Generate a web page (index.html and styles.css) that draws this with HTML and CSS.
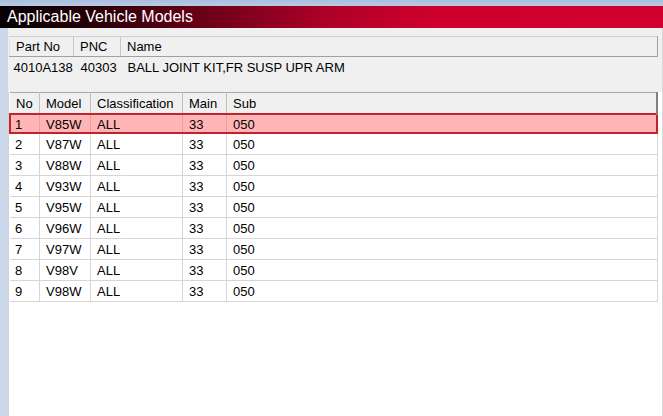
FILE: index.html
```html
<!DOCTYPE html>
<html lang="en">
<head>
    <meta charset="UTF-8">
    <title>Applicable Vehicle Models</title>
    <link rel="stylesheet" href="styles.css">
</head>
<body>
    <div class="window">
        <div class="title">Applicable Vehicle Models</div>

        <div class="frame">
            <div class="side"></div>
            <div class="content">
                <div class="part-area">
                    <table class="part-table">
                        <tr>
                            <th class="c-part">Part No</th>
                            <th class="c-pnc">PNC</th>
                            <th>Name</th>
                        </tr>
                        <tr>
                            <td>4010A138</td>
                            <td>40303</td>
                            <td>BALL JOINT KIT,FR SUSP UPR ARM</td>
                        </tr>
                    </table>
                </div>

                <div class="models-area">
                    <table class="models">
                        <tr>
                            <th class="c-no">No</th>
                            <th class="c-model">Model</th>
                            <th class="c-class">Classification</th>
                            <th class="c-main">Main</th>
                            <th class="c-sub">Sub</th>
                        </tr>
                        <tbody id="modelRows">
                            <!-- rows filled below -->
                        </tbody>
                    </table>
                </div>
            </div>
        </div>
    </div>

    <script>
        // Vehicle model list
        const models = ["V85W", "V87W", "V88W", "V93W", "V95W", "V96W", "V97W", "V98V", "V98W"];
        const rows = document.getElementById('modelRows');

        models.forEach((model, i) => {
            const row = document.createElement('tr');
            if (i === 0) row.className = 'selected';
            row.innerHTML = `
                <td>${i + 1}</td>
                <td>${model}</td>
                <td>ALL</td>
                <td>33</td>
                <td>050</td>
            `;
            rows.appendChild(row);
        });
    </script>
</body>
</html>
```

FILE: styles.css
```css
body {
    margin: 0;
    font-family: "Liberation Sans", Arial, sans-serif;
    font-size: 13px;
    color: #000;
    background: #c9d7ea;
}
.window {
    height: 416px;
    padding-top: 6px;
    box-sizing: border-box;
    background: linear-gradient(to bottom, #a9bfdd 0, #b8cbe3 6px, #c9d7ea 6px);
    display: flex;
    flex-direction: column;
}
.title {
    height: 22px;
    line-height: 22px;
    padding-left: 7px;
    font-size: 16px;
    color: #fff;
    background: linear-gradient(to right, #050003 0%, #2a0008 15%, #70001a 32%, #b00028 50%, #cf002d 66%, #d2002e 100%);
}
.frame {
    flex: 1;
    display: flex;
}
.side {
    width: 8px;
    background: #cad8ea;
}
.content {
    flex: 1;
    display: flex;
    flex-direction: column;
    background: #f0f0f0;
    border-right: 1px solid #d8d8d8;
}
.part-area {
    height: 64px;
    padding: 8px 0 0 1px;
    box-sizing: border-box;
    background: #f0f0f0;
}
.part-table {
    width: 649px;
    border-collapse: collapse;
}
.part-table th {
    height: 19px;
    padding: 0 0 0 6px;
    text-align: left;
    font-weight: normal;
    background: #f0f0f0;
    border-top: 1px solid #d0d0d0;
    border-bottom: 1px solid #a0a0a0;
    border-right: 1px solid #c8c8c8;
    border-left: 1px solid #e4e4e4;
}
.part-table th:last-child {
    border-right: 1px solid #a0a0a0;
}
.part-table td {
    height: 22px;
    padding: 3px 0 0 7px;
    vertical-align: top;
}
.part-table td:first-child {
    padding-left: 4px;
}
.c-part { width: 57px; }
.c-pnc { width: 40px; }

.models-area {
    flex: 1;
    background: #fff;
    border-left: 1px solid #d2d2d2;
}
.models {
    width: 649px;
    border-collapse: collapse;
}
.models th {
    height: 20px;
    padding: 0 0 0 6px;
    text-align: left;
    font-weight: normal;
    background: #f0f0f0;
    border-top: 1px solid #a8a8a8;
    border-bottom: 1px solid #c8c8c8;
    border-right: 1px solid #c0c0c0;
}
.models th:last-child {
    border-right: 2px solid #808080;
}
.models td {
    height: 19px;
    padding: 1px 0 0 6px;
    border-bottom: 1px solid #d6d6d6;
    border-right: 1px solid #d6d6d6;
}
.models td:first-child {
    padding-left: 5px;
}
.c-no { width: 23px; }
.c-model { width: 44px; }
.c-class { width: 85px; }
.c-main { width: 37px; }

.models tr.selected td {
    height: 16px;
    background: #ffb5b5;
    border-top: 2px solid #c2222e;
    border-bottom: 2px solid #c2222e;
    border-right: 1px solid #e8a0a0;
}
.models tr.selected td:first-child {
    border-left: 2px solid #c2222e;
    padding-left: 4px;
}
.models tr.selected td:last-child {
    border-right: 2px solid #c2222e;
}
```
